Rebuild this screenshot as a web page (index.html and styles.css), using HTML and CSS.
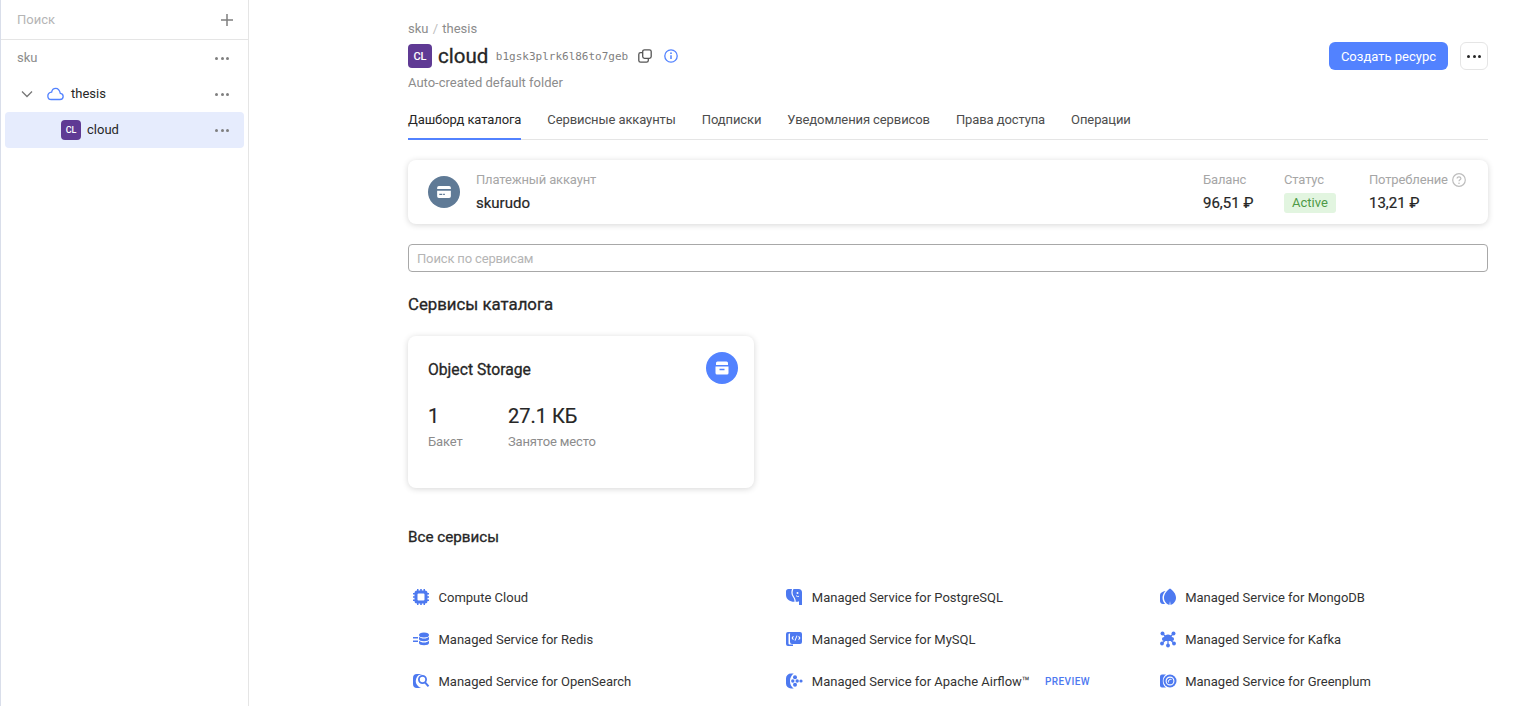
FILE: index.html
```html
<!DOCTYPE html>
<html lang="ru">
<head>
  <meta charset="UTF-8" />
  <meta name="viewport" content="width=device-width, initial-scale=1" />
  <title>cloud</title>
  <link rel="stylesheet" href="styles.css">
</head>
<body>
  <div class="app">
    <aside class="sidebar">
      <div class="side-search">
        <span>Поиск</span>
        <svg class="plus" width="14" height="14" viewBox="0 0 14 14"><path d="M7 1v12M1 7h12" stroke="#7f7f7f" stroke-width="1.5" fill="none"/></svg>
      </div>
      <div class="tree">
        <div class="tree-row tree-root">
          <span class="tree-name">sku</span>
          <span class="dots"><i></i><i></i><i></i></span>
        </div>
        <div class="tree-row tree-cloud">
          <svg width="12" height="8" viewBox="0 0 12 8"><path d="M1 1.500l5 5 5-5" stroke="#777" stroke-width="1.300" fill="none"/></svg>
          <svg class="cloud-icon" width="17" height="14" viewBox="0 0 18 14"><path d="M4.500 12.800h9.200c1.900 0 3.400-1.400 3.400-3.200 0-1.700-1.300-3-3-3.200C13.400 3.200 11.700 1 9.300 1 7 1 5.300 2.700 4.900 5 2.500 5.300.9 6.900.9 9c0 2.200 1.600 3.800 3.600 3.800z" stroke="#5282ff" stroke-width="1.400" fill="none"/></svg>
          <span class="tree-name">thesis</span>
          <span class="dots"><i></i><i></i><i></i></span>
        </div>
        <div class="tree-row tree-folder">
          <span class="badge badge-small">CL</span>
          <span class="tree-name">cloud</span>
          <span class="dots"><i></i><i></i><i></i></span>
        </div>
      </div>
    </aside>

    <main class="main">
      <div class="crumbs">sku <span class="crumb-sep">/</span> thesis</div>
      <div class="title-row">
        <span class="badge">CL</span>
        <h1>cloud</h1>
        <code class="folder-id">b1gsk3plrk6l86to7geb</code>
        <svg class="copy-icon" width="14" height="14" viewBox="0 0 14 14" fill="none" stroke="#555" stroke-width="1.300"><rect x="4.700" y="0.800" width="8.500" height="8.500" rx="1.800"/><path d="M4.700 3.700H2.600C1.600 3.700.8 4.500.8 5.500v5.900c0 1 .8 1.800 1.800 1.800h5.900c1 0 1.800-.8 1.800-1.800V9.300"/></svg>
        <svg class="info-icon" width="14" height="14" viewBox="0 0 14 14" fill="none"><circle cx="7" cy="7" r="6.200" stroke="#5282ff" stroke-width="1.300"/><path d="M7 6.300v3.800" stroke="#5282ff" stroke-width="1.500"/><circle cx="7" cy="4.200" r="0.900" fill="#5282ff"/></svg>
        <div class="title-actions">
          <button class="btn-primary">Создать ресурс</button>
          <button class="btn-more"><span class="dots dots-dark"><i></i><i></i><i></i></span></button>
        </div>
      </div>
      <div class="subtitle">Auto-created default folder</div>

      <nav class="tabs">
        <a class="tab tab-active">Дашборд каталога</a>
        <a class="tab">Сервисные аккаунты</a>
        <a class="tab">Подписки</a>
        <a class="tab">Уведомления сервисов</a>
        <a class="tab">Права доступа</a>
        <a class="tab">Операции</a>
      </nav>

      <section class="billing">
        <span class="billing-icon">
          <svg width="14" height="12" viewBox="0 0 16 14"><path d="M2 0h12a2 2 0 0 1 2 2v1.500H0V2a2 2 0 0 1 2-2zM0 5.500h16V12a2 2 0 0 1-2 2H2a2 2 0 0 1-2-2zM2.500 9v1.500H6V9zM7 9v1.500h2V9z" fill="#fff" fill-rule="evenodd"/></svg>
        </span>
        <div class="billing-account">
          <div class="muted">Платежный аккаунт</div>
          <div class="billing-name">skurudo</div>
        </div>
        <div class="billing-stat stat-balance">
          <div class="muted">Баланс</div>
          <div class="billing-value">96,51 ₽</div>
        </div>
        <div class="billing-stat stat-status">
          <div class="muted">Статус</div>
          <div class="status-pill">Active</div>
        </div>
        <div class="billing-stat stat-usage">
          <div class="muted">Потребление
            <svg class="help-icon" width="14" height="14" viewBox="0 0 14 14" fill="none"><circle cx="7" cy="7" r="6.300" stroke="#bdbdbd" stroke-width="1.200"/><path d="M5.100 5.500c0-1.100.9-1.700 1.900-1.700s1.900.6 1.900 1.600c0 1.400-1.900 1.400-1.900 2.800" stroke="#bdbdbd" stroke-width="1.200"/><circle cx="7" cy="10.200" r="0.800" fill="#bdbdbd"/></svg>
          </div>
          <div class="billing-value">13,21 ₽</div>
        </div>
      </section>

      <input class="service-search" type="text" placeholder="Поиск по сервисам" />

      <h2>Сервисы каталога</h2>

      <section class="storage-card">
        <div class="storage-head">
          <span class="storage-title">Object Storage</span>
          <span class="storage-icon">
            <svg width="16" height="16" viewBox="0 0 16 16"><path d="M3.500 1.500h9A1.500 1.500 0 0 1 14 3v2H2V3a1.500 1.500 0 0 1 1.500-1.500zM1.500 6.500h13V13a1.500 1.500 0 0 1-1.500 1.500H3A1.500 1.500 0 0 1 1.500 13zM5.500 8.800v1.500h5V8.800z" fill="#fff" fill-rule="evenodd"/></svg>
          </span>
        </div>
        <div class="storage-stats">
          <div class="storage-stat stat-buckets">
            <div class="storage-value">1</div>
            <div class="muted-dark">Бакет</div>
          </div>
          <div class="storage-stat">
            <div class="storage-value">27.1 КБ</div>
            <div class="muted-dark">Занятое место</div>
          </div>
        </div>
      </section>

      <h3>Все сервисы</h3>

      <div class="services">
        <a class="service">
          <svg class="svc-icon" width="18" height="18" viewBox="0 0 18 18"><path d="M5 1h1.500v1.500h1.700V1h1.600v1.500h1.700V1H13v1.500a2.500 2.500 0 0 1 2.500 2.500H17v1.500h-1.500v1.700H17v1.600h-1.500v1.700H17V13h-1.500a2.500 2.500 0 0 1-2.500 2.500V17h-1.500v-1.500H9.800V17H8.200v-1.500H6.500V17H5v-1.500A2.500 2.500 0 0 1 2.500 13H1v-1.500h1.500V9.800H1V8.200h1.500V6.500H1V5h1.500A2.500 2.500 0 0 1 5 2.500zM6.500 5.500a1 1 0 0 0-1 1v5a1 1 0 0 0 1 1h5a1 1 0 0 0 1-1v-5a1 1 0 0 0-1-1z" fill="#4d79f0" fill-rule="evenodd"/></svg>
          <span>Compute Cloud</span>
        </a>
        <a class="service">
          <svg class="svc-icon" width="18" height="18" viewBox="0 0 18 18"><path d="M3.500 1H7C6 3.500 6.200 6.500 7.800 8.800c1.200 1.700 1.800 3.100 1.700 5C5.500 14 1 11.500 1 7V3.500A2.500 2.500 0 0 1 3.500 1zM8.400 1h5.100A3.500 3.500 0 0 1 17 4.500V17h-3v-3.800c-.9.500-2 .7-3.300.6.100-2-.6-3.600-1.900-5.500C7.300 6.300 7.300 3.500 8.400 1z" fill="#4d79f0"/><path d="M11 7.500c.8 1 1.900 1.200 3 .8" stroke="#fff" stroke-width="1" fill="none"/><circle cx="12.500" cy="5" r="1" fill="#fff"/></svg>
          <span>Managed Service for PostgreSQL</span>
        </a>
        <a class="service">
          <svg class="svc-icon" width="18" height="18" viewBox="0 0 18 18"><path d="M11 .5c3 2.200 6 5.200 6 9.200 0 3.400-2.400 6.300-5.400 7.300l-.6-4-.6 4c-3-1-5.400-3.900-5.400-7.300C5 5.700 8 2.700 11 .5zM6.500 3C4.600 5 3.500 7.300 3.500 9.700c0 2.500 1 4.700 2.700 6.300H4c-2 0-3-1.500-3-3V7c0-2 2.500-3.500 5.500-4z" fill="#4d79f0" fill-rule="evenodd"/></svg>
          <span>Managed Service for MongoDB</span>
        </a>
        <a class="service">
          <svg class="svc-icon" width="18" height="18" viewBox="0 0 18 18"><path d="M1 7h5v1.500H1zM1 10.500h5V12H1z" fill="#4d79f0"/><ellipse cx="12" cy="5" rx="5" ry="2.500" fill="#4d79f0"/><path d="M7 6.700c1 1.200 3 1.800 5 1.800s4-.6 5-1.800V9c0 1.300-2.200 2.300-5 2.300S7 10.300 7 9zM7 10.700c1 1.200 3 1.800 5 1.800s4-.6 5-1.800V13c0 1.300-2.200 2.300-5 2.300S7 14.300 7 13z" fill="#4d79f0"/></svg>
          <span>Managed Service for Redis</span>
        </a>
        <a class="service">
          <svg class="svc-icon" width="18" height="18" viewBox="0 0 18 18"><path d="M3 2h5v1.500H4.500a1 1 0 0 0-1 1v9a1 1 0 0 0 1 1H8V16H3a2 2 0 0 1-2-2V4a2 2 0 0 1 2-2z" fill="#4d79f0"/><path d="M7 2h8a2 2 0 0 1 2 2v8a2 2 0 0 1-2 2H7a2 2 0 0 1-2-2V4a2 2 0 0 1 2-2zM8 6L6.500 8 8 10l.8-.6L7.900 8l.9-1.400zM14 6l-.8.6.9 1.400-.9 1.400.8.600L15.500 8zM11.600 5.500L9.500 10.500l.9.300 2.100-5z" fill="#4d79f0" fill-rule="evenodd"/></svg>
          <span>Managed Service for MySQL</span>
        </a>
        <a class="service">
          <svg class="svc-icon" width="18" height="18" viewBox="0 0 18 18" fill="#4d79f0"><circle cx="3.500" cy="3.500" r="2"/><circle cx="14.500" cy="3.500" r="2"/><circle cx="3" cy="13.500" r="1.900"/><circle cx="15" cy="13.500" r="1.900"/><circle cx="9" cy="15.500" r="1.900"/><path d="M5 11c-1.300 0-2-1-2-2s.9-1.900 2.100-1.900C5.500 5.600 7.100 4.500 9 4.500s3.500 1.100 3.900 2.600c1.200 0 2.100.9 2.100 1.900s-.7 2-2 2z"/><path d="M3.500 3.500l3 3M14.500 3.500l-3 3M9 10v4M6 10.500l-2.700 2.500M12 10.500l2.700 2.500" stroke="#4d79f0" stroke-width="1.200" fill="none"/></svg>
          <span>Managed Service for Kafka</span>
        </a>
        <a class="service">
          <svg class="svc-icon" width="18" height="18" viewBox="0 0 18 18"><path d="M5 2h5.500a7 7 0 0 0-4 12.500c1.200 1 2.600 1.500 4 1.500H5a4 4 0 0 1-4-4V6a4 4 0 0 1 4-4z" fill="#4d79f0"/><circle cx="10.500" cy="7.500" r="3.600" fill="none" stroke="#4d79f0" stroke-width="1.800"/><path d="M13 10.300l3.500 4" stroke="#4d79f0" stroke-width="2" fill="none"/></svg>
          <span>Managed Service for OpenSearch</span>
        </a>
        <a class="service">
          <svg class="svc-icon" width="18" height="18" viewBox="0 0 18 18" fill="#4d79f0"><path d="M6 1.500h2.700C6.200 3.500 5 6 5 9s1.200 5.500 3.700 7.500H6a5 5 0 0 1-5-5v-5a5 5 0 0 1 5-5z"/><circle cx="10" cy="5.200" r="2"/><circle cx="10" cy="12.800" r="2"/><circle cx="7.800" cy="9" r="1.700"/><circle cx="12.200" cy="9" r="1.700"/><circle cx="16" cy="9" r="1.600"/></svg>
          <span>Managed Service for Apache Airflow™</span>
          <span class="preview">PREVIEW</span>
        </a>
        <a class="service">
          <svg class="svc-icon" width="18" height="18" viewBox="0 0 18 18"><path d="M3 2.500h4C4.800 4 3.800 6.300 3.800 9S4.800 14 7 15.500H3a2 2 0 0 1-2-2v-9a2 2 0 0 1 2-2z" fill="#4d79f0"/><circle cx="11" cy="9" r="6.500" fill="#4d79f0"/><circle cx="11" cy="9" r="3.900" fill="none" stroke="#fff" stroke-width="1.100"/><path d="M9.500 10.500a2.300 2.300 0 0 1 3-3" stroke="#fff" stroke-width="1" fill="none"/></svg>
          <span>Managed Service for Greenplum</span>
        </a>
      </div>
    </main>
  </div>
</body>
</html>
```

FILE: styles.css
```css
* { box-sizing: border-box; }

html, body { height: 100%; }

body {
  margin: 0;
  overflow: hidden;
  background: #fff;
  color: #262626;
  font-family: Roboto, "Noto Sans", Arial, sans-serif;
  font-size: 13px;
}

/* medium weight of the original face is lighter than Roboto 500 */
h1, h2, h3, .storage-title {
  margin: 0;
  font-weight: 400;
  -webkit-text-stroke: .3px #262626;
}

.app {
  display: grid;
  grid-template-columns: 249px 1fr;
  height: 706px;
}

/* sidebar */
.sidebar {
  border-left: 1px solid #d9deea;
  border-right: 1px solid #e5e5e5;
}

.side-search {
  display: flex;
  align-items: center;
  justify-content: space-between;
  height: 40px;
  padding: 0 14px 0 16px;
  border-bottom: 1px solid #e5e5e5;
  color: #b5b5b5;
}

.tree { padding: 0 4px; }

.tree-row {
  display: flex;
  align-items: center;
  height: 36px;
  padding-right: 15px;
  border-radius: 4px;
}

.tree-name { flex: 1; padding-bottom: 2px; }

.tree-root { padding-left: 12px; color: #8c8c8c; }

.tree-cloud { padding-left: 16px; }
.tree-cloud .cloud-icon { margin: 0 7px 0 14px; }

.tree-folder { padding-left: 56px; background: #e6ecfd; }
.tree-folder .badge { margin-right: 6px; }

.dots { display: inline-flex; gap: 2.500px; }
.dots i { width: 3px; height: 3px; border-radius: 50%; background: #7f7f7f; }
.dots-dark i { background: #262626; }

.badge {
  display: inline-flex;
  align-items: center;
  justify-content: center;
  flex: none;
  width: 24px;
  height: 24px;
  border-radius: 4px;
  background: #5f3a94;
  color: #fff;
  font-size: 11px;
  font-weight: 500;
}
.badge-small { width: 20px; height: 20px; font-size: 9px; }

/* main column */
.main { padding: 0 34px 0 159px; overflow: hidden; }

.crumbs { padding-top: 21px; line-height: 16px; color: #8c8c8c; }
.crumb-sep { color: #bdbdbd; padding: 0 1px; }

.title-row { display: flex; align-items: center; height: 28px; margin-top: 5px; }
.title-row h1 { margin-left: 6px; font-size: 20.500px; line-height: 28px; }

.folder-id {
  margin-left: 7.500px;
  font-family: "DejaVu Sans Mono", monospace;
  font-size: 11px;
  color: #7f7f7f;
}
.copy-icon { margin-left: 10px; }
.info-icon { margin-left: 12px; }

.title-actions { display: flex; gap: 12px; margin-left: auto; }

.btn-primary {
  height: 28px;
  padding: 0 12px;
  border: 0;
  border-radius: 6px;
  background: #5282ff;
  color: #fff;
  font: inherit;
}
.btn-more {
  display: flex;
  align-items: center;
  justify-content: center;
  width: 28px;
  height: 28px;
  padding: 0;
  border: 1px solid #e5e5e5;
  border-radius: 6px;
  background: #fff;
}

.subtitle { margin-top: 5px; line-height: 16px; color: #8c8c8c; }

.tabs {
  display: flex;
  gap: 26px;
  height: 40px;
  margin-top: 9px;
  border-bottom: 1px solid #e5e5e5;
}
.tab { height: 40px; line-height: 39px; color: #4d4d4d; letter-spacing: -.1px; }
.tab-active { color: #262626; border-bottom: 2px solid #5282ff; }

/* billing account strip */
.billing {
  display: flex;
  align-items: center;
  height: 64px;
  margin-top: 20px;
  padding: 0 20px;
  border-radius: 8px;
  background: #fff;
  box-shadow: 0 1px 6px rgba(0, 0, 0, .16);
}

.billing-icon {
  display: flex;
  align-items: center;
  justify-content: center;
  width: 32px;
  height: 32px;
  margin-right: 16px;
  border-radius: 50%;
  background: #5f7a96;
}

.billing-account { flex: 1; }
.muted { color: #a6a6a6; line-height: 16px; display: flex; align-items: center; gap: 4px; letter-spacing: -.15px; }
.help-icon { flex: none; }
.billing-name { margin-top: 6px; font-size: 15px; line-height: 18px; -webkit-text-stroke: .2px #262626; }
.billing-value { margin-top: 6px; font-size: 15px; line-height: 18px; -webkit-text-stroke: .2px #262626; }

.stat-balance { width: 81px; }
.stat-status { width: 85px; }
.stat-usage { width: 99px; }

.status-pill {
  display: inline-block;
  margin-top: 5px;
  padding: 0 8px;
  height: 20px;
  line-height: 20px;
  border-radius: 3px;
  background: #e2f5e0;
  color: #4e9a47;
}

.service-search {
  display: block;
  width: 100%;
  height: 28px;
  margin-top: 20px;
  padding: 0 8px;
  border: 1px solid #a8a8a8;
  border-radius: 4px;
  font: inherit;
}
.service-search::placeholder { color: #b5b5b5; letter-spacing: -.15px; }

.main h2 { margin-top: 22px; font-size: 16.800px; line-height: 20px; }

/* object storage card */
.storage-card {
  width: 346px;
  height: 152px;
  margin-top: 22px;
  padding: 16px 16px 0 20px;
  border-radius: 8px;
  box-shadow: 0 1px 6px rgba(0, 0, 0, .16);
}
.storage-head { display: flex; align-items: center; justify-content: space-between; }
.storage-title { padding-top: 2px; font-size: 15.700px; }
.storage-icon {
  display: flex;
  align-items: center;
  justify-content: center;
  width: 32px;
  height: 32px;
  border-radius: 50%;
  background: #5282ff;
}

.storage-stats { display: flex; margin-top: 18px; }
.stat-buckets { width: 80px; }
.storage-value { font-size: 20px; line-height: 28px; -webkit-text-stroke: .2px #262626; }
.muted-dark { margin-top: 4px; line-height: 16px; color: #8c8c8c; letter-spacing: -.15px; }

.main h3 { margin-top: 39px; font-size: 15.200px; line-height: 20px; }

/* services list */
.services {
  display: grid;
  grid-template-columns: repeat(3, 373.330px);
  grid-auto-rows: 42px;
  margin-top: 29px;
}
.service { display: flex; align-items: center; color: #333; }
.svc-icon { margin: 0 8.500px 0 4px; flex: none; }
.preview { margin-left: 15px; font-size: 10px; font-weight: 500; letter-spacing: .4px; color: #4d79f0; }
```
